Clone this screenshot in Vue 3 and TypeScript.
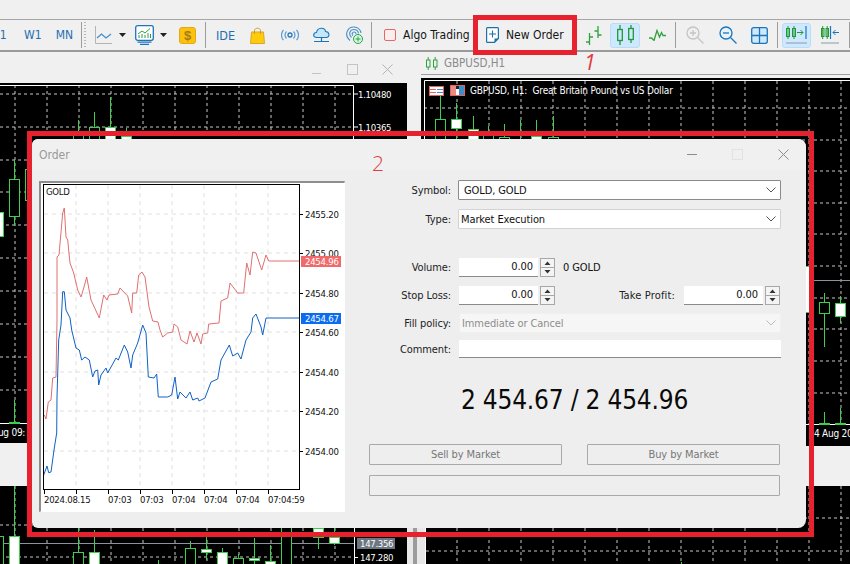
<template>
  <div class="page">
    <div class="top-band"></div>

    <div class="toolbar">
      <span class="tf ml-9 w16">D1</span>
      <span class="tf ml17 w16">W1</span>
      <span class="tf ml15 w19">MN</span>
      <i class="sep ml7"></i>
      <i class="grip ml2"></i>
      <svg class="ml9" width="17" height="18" viewBox="0 0 17 18"><path d="M.5 0V17.5H17" fill="none" stroke="#b4b4b4"/><path d="M2 12L6.500 8L11 12L16 8" fill="none" stroke="#3d8fcb" stroke-width="1.200"/></svg>
      <svg class="ml7" width="7" height="4" viewBox="0 0 7 4"><path d="M0 0H7L3.500 4Z" fill="#222"/></svg>
      <svg class="ml9" width="19" height="20" viewBox="0 0 19 20"><rect x=".7" y=".7" width="17.600" height="14.600" rx="2" fill="#fff" stroke="#1b75bc" stroke-width="1.300"/><path d="M3 9L7 6L10 8L15 3.500" fill="none" stroke="#2c9e4b"/><path d="M4 13V10M7 13V9M10 13V10M13 13V8M15.500 13V9" stroke="#2c9e4b"/><path d="M2.500 17.200H16.500M5 19.300H14" stroke="#1b75bc" stroke-width="1.300"/></svg>
      <svg class="ml6" width="7" height="4" viewBox="0 0 7 4"><path d="M0 0H7L3.500 4Z" fill="#222"/></svg>
      <span class="dollar ml12">$</span>
      <i class="sep ml9"></i>
      <span class="tf ide ml10">IDE</span>
      <svg class="ml16" width="15" height="17" viewBox="0 0 15 17"><path d="M1.500 5H13.500L14.500 16.500H.5Z" fill="#ffcb0c" stroke="#d8a72a"/><path d="M4.500 7V3.500C4.500 .5 10.500 .5 10.500 3.500V7" fill="none" stroke="#c99b2a"/></svg>
      <svg class="ml16" width="18" height="12" viewBox="0 0 18 12"><circle cx="9" cy="6" r="2" fill="none" stroke="#2a78b8" stroke-width="1.300"/><path d="M5.500 2.500C3.800 4.500 3.800 7.500 5.500 9.500M12.500 2.500C14.200 4.500 14.200 7.500 12.500 9.500M2.500 .8C-.2 3.800-.2 8.200 2.500 11.200M15.500 .8C18.200 3.800 18.200 8.200 15.500 11.200" fill="none" stroke="#5b9fd4" stroke-width="1.200"/></svg>
      <svg class="ml14" width="17" height="18" viewBox="0 0 17 18"><path d="M3.500 11.500C-.5 11.500 0 6.500 3.500 6.500C4.500 1 12 1 12.500 5.500C16.500 5.500 17.500 11.500 13 11.500Z" fill="#c8e6fa" stroke="#1b75bc" stroke-width="1.100"/><path d="M8.500 11.500V15.500M1 15.500H16" stroke="#1b75bc" stroke-width="1.200"/></svg>
      <svg class="ml15" width="18" height="18" viewBox="0 0 18 18"><path d="M5 14.500C-1.500 9 2.500 .8 9 1C13 1.100 15.500 4 16 7M6.500 11.500C3 8 5 3.500 9 3.500C11.500 3.500 13.300 5.300 13.500 7.500M8 9.500C6.300 8 7.500 6 9 6C10 6 11 6.800 11 8" fill="none" stroke="#4a90c8" stroke-width="1.100"/><circle cx="13" cy="13" r="4.500" fill="#dff5e4" stroke="#22a64a"/><path d="M13 10.500V15.500M10.500 13H15.500" stroke="#22a64a"/></svg>
      <i class="sep ml8"></i>
      <span class="algo-box ml12"></span>
      <span class="tb-text ml7 w66">Algo Trading</span>
      <svg class="ml17" width="13" height="16" viewBox="0 0 13 16"><path d="M1.500.6H11.500C12 .6 12.400 1 12.400 1.500V11.500L8.500 15.400H1.500C1 15.400 .6 15 .6 14.500V1.500C.6 1 1 .6 1.500 .6Z" fill="#fff" stroke="#1d6fa8" stroke-width="1.200"/><path d="M12.400 11.500H8.500V15.400Z" fill="#1d6fa8"/><path d="M6.500 3.500V10.500M3 7H10" stroke="#1d6fa8" stroke-width="1.100"/></svg>
      <span class="tb-text ml7 w57">New Order</span>
      <svg class="ml22" width="17" height="19" viewBox="0 0 17 19"><path d="M4.500 7V19M1 16H4.500M4.500 11H8M13 0V12M9.500 5H13M13 9H16.500" fill="none" stroke="#2fa23f" stroke-width="1.300"/></svg>
      <span class="tb-active ml8 w30">
        <svg width="17" height="20" viewBox="0 0 17 20"><g fill="none" stroke="#1f9a33" stroke-width="1.300"><rect x=".7" y="4.500" width="4.600" height="11"/><rect x="11.700" y="3.500" width="4.600" height="11"/><path d="M3 0V4.500M3 15.500V20M14 0V3.500M14 14.500V18"/></g></svg>
      </span>
      <svg class="ml9" width="17" height="12" viewBox="0 0 17 12"><path d="M0 9H2.500L5 11.500L8 1.500L10.500 8L12.500 3.500L14 6.500H17" fill="none" stroke="#2fa23f" stroke-width="1.300"/></svg>
      <i class="sep ml9"></i>
      <svg class="ml10" width="18" height="18" viewBox="0 0 18 18"><circle cx="7" cy="7" r="6" fill="none" stroke="#c4c4c4" stroke-width="1.300"/><path d="M7 4V10M4 7H10" stroke="#c4c4c4" stroke-width="1.300"/><path d="M11.500 11.500L17.500 17.500" stroke="#c4c4c4" stroke-width="1.300"/></svg>
      <svg class="ml15" width="18" height="18" viewBox="0 0 18 18"><circle cx="7" cy="7" r="6" fill="#e6f3fc" stroke="#1b75bc" stroke-width="1.300"/><path d="M4 7H10" stroke="#1b75bc" stroke-width="1.300"/><path d="M11.500 11.500L17.500 17.500" stroke="#1b75bc" stroke-width="1.300"/></svg>
      <svg class="ml14" width="17" height="17" viewBox="0 0 17 17"><rect x=".7" y=".7" width="15.600" height="15.600" rx="2" fill="#cfe9fb" stroke="#1b75bc" stroke-width="1.300"/><path d="M8.500 1V16M1 8.500H16" stroke="#1b75bc" stroke-width="1.300"/></svg>
      <i class="sep ml9"></i>
      <span class="tb-active ml4 w29">
        <svg width="21" height="20" viewBox="0 0 21 20"><g fill="none" stroke="#1f9a33" stroke-width="1"><rect x=".5" y="3.500" width="3" height="8"/><rect x="6.500" y="3.500" width="3" height="8"/><path d="M2 1V14M8 1V14"/></g><path d="M11 7.500H17M14.500 5L17 7.500L14.500 10" fill="none" stroke="#1f9a33"/><path d="M20 1V14" stroke="#1b75bc" stroke-width="1.200"/><path d="M0 18H21" stroke="#8a9aa6"/></svg>
      </span>
      <svg class="ml10" width="18" height="20" viewBox="0 0 18 20"><g fill="none" stroke="#1f9a33" stroke-width="1"><rect x=".5" y="3.500" width="2.500" height="8"/><rect x="5" y="3.500" width="2.500" height="8"/><path d="M1.700 1V14M6.200 1V14"/></g><path d="M9.500 1V14" stroke="#1b75bc" stroke-width="1.200"/><path d="M18 7.500H12M14.500 5L12 7.500L14.500 10" fill="none" stroke="#1b75bc"/><path d="M0 18H18" stroke="#8a9aa6"/></svg>
      <i class="sep ml10"></i>
    </div>

    <!-- chart windows behind the dialog -->
    <section class="mdi win-a">
      <div class="win-ctrls">
        <i class="c-min"></i><i class="c-max"></i>
        <svg width="11" height="11" viewBox="0 0 11 11"><path d="M.5 .5L10.500 10.500M10.500 .5L.5 10.500" stroke="#b4b4b4"/></svg>
      </div>
      <svg class="chart" width="407" height="360" viewBox="0 83 407 360">
        <rect x="0" y="83" width="407" height="360" fill="#000"/>
        <g class="grid">
          <path v-for="x in vA" :key="x" :d="`M${x} 85V423`"/>
          <path v-for="y in hA" :key="y" :d="`M0 ${y}H353`"/>
        </g>
        <path d="M0 85.500H353.500V423.500H0" fill="none" stroke="#fff"/>
        <path d="M353 94H358M353 127H358" stroke="#fff"/>
        <g v-for="(c, i) in candlesA" :key="i"><path :d="wick(c)" class="wick"/><rect v-bind="body(c)" :class="c.up ? 'up' : 'down'"/></g>
        <text x="358" y="98" class="axis price">1.10480</text>
        <text x="358" y="131" class="axis price">1.10365</text>
        <text x="-8" y="436" class="axis">Aug 09:</text>
      </svg>
    </section>

    <section class="mdi win-b">
      <div class="win-b-title">
        <svg width="12" height="13" viewBox="0 0 12 13"><g fill="none" stroke="#2fa23f"><rect x=".5" y="3" width="3.500" height="7"/><rect x="7.500" y="3" width="3.500" height="7"/><path d="M2.200 0V3M2.200 10V13M9.200 0V3M9.200 10V13"/></g></svg>
        <span>GBPUSD,H1</span>
      </div>
      <svg class="chart" width="429" height="368" viewBox="421 77 429 368">
        <rect x="421" y="77" width="429" height="368" fill="#000"/>
        <g class="grid">
          <path v-for="x in vB" :key="x" :d="`M${x} 80V423`"/>
          <path v-for="y in hB" :key="y" :d="`M424 ${y}H850`"/>
        </g>
        <path d="M850 79.500H424.500V423.500H850" fill="none" stroke="#fff"/>
        <path d="M814 279.500H850" stroke="#8c939a"/>
        <g v-for="(c, i) in candlesB" :key="i"><path :d="wick(c)" class="wick"/><rect v-bind="body(c)" :class="c.up ? 'up' : 'down'"/></g>
        <rect x="429.500" y="85.500" width="14" height="9" fill="#fff" stroke="#e2645c"/>
        <path d="M430 88.500H436M430 91.500H436" stroke="#e2645c"/>
        <path d="M437 88.500H443M437 91.500H443" stroke="#3d8fcb"/>
        <rect x="450.500" y="84.500" width="14" height="10" fill="#fff" stroke="#e2645c"/>
        <rect x="451" y="85" width="5" height="9" fill="#e88c84"/>
        <rect x="459" y="85" width="5" height="9" fill="#3d8fcb"/>
        <rect x="456" y="85" width="3" height="3" fill="#222"/>
        <text x="470" y="93" class="axis wide-text">GBPUSD, H1:&#160; Great Britain Pound vs US Dollar</text>
        <text x="814" y="436" class="axis">4 Aug 20</text>
      </svg>
    </section>

    <section class="mdi win-c">
      <svg class="chart" width="407" height="78" viewBox="0 486 407 78">
        <rect x="0" y="486" width="407" height="78" fill="#000"/>
        <g class="grid">
          <path v-for="x in vA" :key="x" :d="`M${x} 486V564`"/>
          <path d="M0 525H353M0 557H353"/>
        </g>
        <path d="M0 543.500H354" stroke="#8c939a"/>
        <path d="M354.500 486V564M354 557.500H358" stroke="#fff"/>
        <g v-for="(c, i) in candlesC" :key="i"><path :d="wick(c)" class="wick"/><rect v-bind="body(c)" :class="c.up ? 'up' : 'down'"/></g>
        <rect x="357" y="538" width="38" height="11" fill="#6d7782"/>
        <text x="360" y="547" class="axis price">147.356</text>
        <text x="360" y="561" class="axis price">147.280</text>
      </svg>
    </section>

    <section class="mdi win-d">
      <svg class="chart" width="424" height="78" viewBox="426 486 424 78">
        <rect x="426" y="486" width="424" height="78" fill="#000"/>
        <g class="grid">
          <path v-for="x in vB" :key="x" :d="`M${x} 486V564`"/>
          <path d="M426 518H850M426 551H850"/>
        </g>
        <path d="M681.500 562V564" stroke="#3bd14c"/>
      </svg>
    </section>
    <div class="strip"><i></i></div>

    <!-- order dialog -->
    <section class="dialog">
      <header class="dlg-head">
        <span class="dlg-title">Order</span>
        <div class="dlg-ctrls">
          <i class="d-min"></i><i class="d-max"></i>
          <svg width="11" height="11" viewBox="0 0 11 11"><path d="M.5 .5L10.500 10.500M10.500 .5L.5 10.500" stroke="#8c8c8c"/></svg>
        </div>
      </header>
      <div class="dlg-body">
        <div class="tick-frame">
          <svg width="304" height="329" viewBox="40 183 304 329">
            <rect x="40" y="183" width="304" height="329" fill="#fff"/>
            <g class="tgrid">
              <path v-for="x in tickV" :key="x" :d="`M${x} 185V489`"/>
              <path v-for="y in tickH" :key="y" :d="`M43 ${y}H298`"/>
            </g>
            <polyline :points="askLine" class="ask"/>
            <polyline :points="bidLine" class="bid"/>
            <rect x="42.500" y="184.500" width="256" height="305" fill="none" stroke="#000"/>
            <path v-for="y in tickH" :key="'t' + y" :d="`M298 ${y}.500H302`" stroke="#000"/>
            <path v-for="x in tickV" :key="'b' + x" :d="`M${x}.500 490V494`" stroke="#000"/>
            <path d="M43.500 490V494" stroke="#000"/>
            <text x="45" y="195" class="tlabel">GOLD</text>
            <text v-for="l in priceLabels" :key="l.t" x="304" :y="l.y" class="tlabel">{{ l.t }}</text>
            <rect x="300" y="256" width="40" height="11" fill="#f06a6a"/>
            <text x="304" y="265" class="tlabel tag">2454.96</text>
            <rect x="300" y="313" width="40" height="11" fill="#0a6cf0"/>
            <text x="304" y="322" class="tlabel tag">2454.67</text>
            <text x="43" y="503" class="tlabel">2024.08.15</text>
            <text v-for="t in timeLabels" :key="t.x" :x="t.x" y="503" class="tlabel">{{ t.t }}</text>
          </svg>
        </div>

        <form class="form" @submit.prevent>
          <div class="row">
            <label>Symbol:</label>
            <div class="select dark"><span class="pad5">GOLD, GOLD</span><svg width="10" height="6" viewBox="0 0 10 6"><path d="M.5 .5L5 5L9.500 .5" fill="none" stroke="#555"/></svg></div>
          </div>
          <div class="row mt9">
            <label>Type:</label>
            <div class="select"><span>Market Execution</span><svg width="10" height="6" viewBox="0 0 10 6"><path d="M.5 .5L5 5L9.500 .5" fill="none" stroke="#555"/></svg></div>
          </div>
          <div class="row mt28">
            <label>Volume:</label>
            <div class="num">0.00</div>
            <svg class="spin" width="15" height="19" viewBox="0 0 15 19"><rect x=".5" y=".5" width="14" height="18" fill="#f4f4f4" stroke="#a8a8a8"/><path d="M1 9.500H14" stroke="#a8a8a8"/><path d="M4.500 7H10.500L7.500 3.500Z M4.500 12H10.500L7.500 15.500Z" fill="#333"/></svg>
            <span class="unit">0 GOLD</span>
          </div>
          <div class="row mt8">
            <label>Stop Loss:</label>
            <div class="num">0.00</div>
            <svg class="spin" width="15" height="19" viewBox="0 0 15 19"><rect x=".5" y=".5" width="14" height="18" fill="#f4f4f4" stroke="#a8a8a8"/><path d="M1 9.500H14" stroke="#a8a8a8"/><path d="M4.500 7H10.500L7.500 3.500Z M4.500 12H10.500L7.500 15.500Z" fill="#333"/></svg>
            <label class="tp">Take Profit:</label>
            <div class="num">0.00</div>
            <svg class="spin" width="15" height="19" viewBox="0 0 15 19"><rect x=".5" y=".5" width="14" height="18" fill="#f4f4f4" stroke="#a8a8a8"/><path d="M1 9.500H14" stroke="#a8a8a8"/><path d="M4.500 7H10.500L7.500 3.500Z M4.500 12H10.500L7.500 15.500Z" fill="#333"/></svg>
          </div>
          <div class="row mt8">
            <label>Fill policy:</label>
            <div class="select off"><span>Immediate or Cancel</span><svg width="10" height="6" viewBox="0 0 10 6"><path d="M.5 .5L5 5L9.500 .5" fill="none" stroke="#bbb"/></svg></div>
          </div>
          <div class="row mt7 low">
            <label>Comment:</label>
            <div class="comment"></div>
          </div>
          <div class="quote">2 454.67 / 2 454.96</div>
          <div class="btns">
            <div class="btn">Sell by Market</div>
            <div class="btn">Buy by Market</div>
          </div>
          <div class="btn wide"></div>
        </form>
      </div>
    </section>

    <!-- red annotations drawn over the screenshot -->
    <div class="mark mark-btn"></div>
    <div class="mark mark-dlg"></div>
    <span class="num-note note-1">1</span>
    <span class="num-note note-2">2</span>
  </div>
</template>

<script setup lang="ts">
interface Candle {
  x: number;
  hi: number;
  lo: number;
  top: number;
  bot: number;
  up: boolean;
}

const c = (x: number, hi: number, top: number, bot: number, lo: number, up = false): Candle => ({ x, hi, lo, top, bot, up });

const vA = [15, 47, 79, 111, 143, 175, 207, 239, 271, 303, 335];
const hA = [94, 127, 160, 192, 225, 258, 291, 324, 357, 390];
const vB = [457, 489, 521, 553, 585, 617, 649, 681, 713, 745, 777, 809, 841];
const hB = [107, 139, 170, 202, 233, 265, 297, 328, 360, 392];
const tickV = [75, 107, 139, 171, 203, 235, 267];
const tickH = [214, 253, 293, 332, 372, 411, 451];

const candlesA: Candle[] = [
  c(-2, 200, 212, 236, 250, true),
  c(14, 160, 179, 216, 226),
  c(14, 400, 422, 423, 423),
  c(30, 150, 169, 200, 210),
  c(78, 120, 134, 150, 150),
  c(94, 112, 127, 150, 150),
  c(110, 97, 127, 150, 150, true),
  c(126, 128, 136, 150, 150, true),
];

const candlesB: Candle[] = [
  c(440, 93, 118, 150, 150),
  c(456, 102, 118, 127, 140, true),
  c(473, 115, 128, 150, 150, true),
  c(488, 125, 134, 150, 150),
  c(504, 123, 136, 150, 150),
  c(520, 119, 130, 131, 150),
  c(536, 119, 130, 131, 132),
  c(536, 132, 135, 150, 150, true),
  c(553, 115, 136, 150, 150),
  c(805, 255, 265, 311, 320, true),
  c(824, 292, 301, 312, 346),
  c(840, 295, 302, 315, 322, true),
  c(824, 411, 422, 423, 423),
  c(840, 407, 422, 423, 423),
];

const candlesC: Candle[] = [
  c(-2, 500, 536, 570, 570),
  c(14, 486, 536, 570, 570, true),
  c(78, 528, 552, 570, 570),
  c(94, 530, 552, 570, 570, true),
  c(158, 560, 570, 570, 570),
  c(190, 541, 548, 570, 570),
  c(206, 533, 549, 552, 560, true),
  c(222, 548, 552, 570, 570, true),
  c(238, 554, 558, 570, 570),
  c(254, 538, 558, 560, 570, true),
  c(270, 545, 561, 570, 570, true),
  c(286, 500, 510, 570, 570),
  c(318, 520, 528, 537, 549, true),
  c(334, 500, 537, 543, 545, true),
];

const wick = (k: Candle) => `M${k.x + 0.5} ${k.hi}V${k.top}M${k.x + 0.5} ${k.bot}V${k.lo}`;
const body = (k: Candle) => ({ x: k.x - 4.5, y: k.top + 0.5, width: 10, height: Math.max(k.bot - k.top, 1) });

const askLine =
  "43.3,415 45,419 47.3,402 50,400 51.7,378 55,377 56,320 56,257 58,255 61.7,213 63.3,208 65,237 66.7,240 69,263 72.7,273 76.7,290 80,297 83,287 85.7,277 90,300 98.3,318 102.7,295 106,300 108,295 116.7,294 119,288 126.7,296 130.7,313 131.7,293 135.7,293 137.7,275 141,272 144,277 148,307 151.7,321 157,322 159,330 161.7,337 166.7,333 171.7,332 173,324 176.7,327 180,340 186,344 189,331 193,342 196,333 200,344 201.7,334 206.7,333 207.7,324 218,323 220,301 226.7,298 229,283 236.7,293 242.7,293 245.7,263 249,275 251.7,252 255,253 260.7,270 265,255 267.7,261 298,261";
const bidLine =
  "42.7,475 46,466 47.7,472.7 50,472 53.3,448 55.7,433 56,397 57.7,340 60,325 61.7,291.7 63.3,291.7 65,310 69,318 70.7,330 75,348 78.3,350 80.7,360 84,357 88.3,360 91.7,377 94,371 96.7,370 97.7,385 100,375 105,368 106.7,373 115,358 117.3,360 123.3,345 126.7,352 130,368 131.7,355 136.7,343 141.7,325 145,333 147.3,377 153,378 155.7,374 157.3,397 166.7,397 170.7,395 174,377 176.7,399 179,392 185,398 189,392 191.7,400 196.7,398 198,401 204,398 210,382 216.7,379 220,360 228.3,345 231.7,356 236.7,353 240,359 245,340 250,332 251.7,318 255,314 260,327 261.7,335 265,318 298,318";

const priceLabels = [
  { t: "2455.20", y: 218 },
  { t: "2455.00", y: 257 },
  { t: "2454.80", y: 297 },
  { t: "2454.60", y: 336 },
  { t: "2454.40", y: 376 },
  { t: "2454.20", y: 415 },
  { t: "2454.00", y: 455 },
];

const timeLabels = [
  { t: "07:03", x: 107 },
  { t: "07:03", x: 139 },
  { t: "07:04", x: 171 },
  { t: "07:04", x: 203 },
  { t: "07:04", x: 235 },
  { t: "07:04:59", x: 267 },
];
</script>

<style>
html, body { margin: 0; background: #f0f0f0; }
</style>

<style scoped>
.page {
  position: relative;
  width: 850px;
  height: 564px;
  overflow: hidden;
  background: #f0f0f0;
  font-family: "DejaVu Sans Condensed", "Noto Sans", sans-serif;
  font-size: 12px;
  color: #111;
}
.top-band { height: 19px; border-bottom: 1px solid #a6a6a6; box-sizing: content-box; }

.toolbar {
  display: flex;
  align-items: center;
  height: 30px;
  border-bottom: 2px solid #9a9a9a;
  background: #f0f0f0;
  white-space: nowrap;
}
.toolbar > * { flex: none; }
.tf { color: #1f6fb0; text-align: center; font-size: 12px; }
.ide { width: 18px; font-size: 12.500px; }
.sep { width: 1px; height: 26px; background: #9c9c9c; }
.grip { width: 2px; height: 26px; background: repeating-linear-gradient(#b5b5b5 0 1px, transparent 1px 3px); }
.dollar {
  width: 17px;
  height: 17px;
  box-sizing: border-box;
  border: 1px solid #e3a90f;
  border-radius: 3px;
  background: #fcc10f;
  color: #a87b12;
  text-align: center;
  font: bold 13px/15px "Liberation Sans", sans-serif;
}
.algo-box { width: 12px; height: 12px; box-sizing: border-box; border: 1.500px solid #e0696b; border-radius: 2px; background: #fdeeee; }
.tb-text { font-size: 12px; text-align: center; color: #151515; }
.tb-active {
  display: flex;
  align-items: center;
  justify-content: center;
  height: 25px;
  box-sizing: border-box;
  background: #cde8ff;
  border: 1px solid #b9dcf7;
  border-radius: 3px;
}
.ml-9 { margin-left: -9px; }
.ml2 { margin-left: 2px; }
.ml4 { margin-left: 4px; }
.ml6 { margin-left: 6px; }
.ml7 { margin-left: 7px; }
.ml8 { margin-left: 8px; }
.ml9 { margin-left: 9px; }
.ml10 { margin-left: 10px; }
.ml12 { margin-left: 12px; }
.ml14 { margin-left: 14px; }
.ml15 { margin-left: 15px; }
.ml16 { margin-left: 16px; }
.ml17 { margin-left: 17px; }
.ml22 { margin-left: 22px; }
.w16 { width: 16px; }
.w19 { width: 19px; }
.w29 { width: 29px; }
.w30 { width: 30px; }
.w57 { width: 57px; }
.w66 { width: 66px; }

/* chart windows */
.mdi { position: absolute; }
.chart { display: block; }
.win-a { left: 0; top: 52px; width: 407px; padding-top: 31px; }
.win-ctrls { position: absolute; top: 12px; left: 312px; display: flex; align-items: flex-end; height: 11px; }
.c-min { width: 9px; height: 1px; background: #c4c4c4; margin-bottom: 1px; }
.c-max { width: 9px; height: 9px; border: 1px solid #c4c4c4; margin-left: 26px; }
.win-ctrls svg { margin-left: 24px; }
.win-b { left: 421px; top: 52px; width: 429px; }
.win-b-title {
  display: flex;
  align-items: center;
  gap: 6px;
  height: 22px;
  padding-left: 5px;
  margin-bottom: 3px;
  color: #8a8a8a;
  font-size: 11.500px;
  border-bottom: 1px solid #a0a0a0;
  box-sizing: content-box;
}
.win-c { left: 0; top: 486px; }
.win-d { left: 426px; top: 486px; }
.strip {
  position: absolute;
  left: 407px;
  top: 443px;
  width: 19px;
  height: 121px;
  background: #e8e8e8;
  border-right: 1px solid #fff;
  box-sizing: border-box;
}
.strip i { display: block; width: 4px; height: 100%; margin-left: 6px; background: #9c9c9c; }
.grid path { fill: none; stroke: #c8c8c8; stroke-dasharray: 3 3; }
.wick { fill: none; stroke: #3bd14c; }
.up { fill: #fff; stroke: #3bd14c; }
.down { fill: #000; stroke: #3bd14c; }
.axis { fill: #fff; font-size: 10px; letter-spacing: -0.25px; }
.axis.price { font-size: 9.500px; letter-spacing: -0.3px; }
.axis.wide-text { letter-spacing: -0.17px; }

/* dialog */
.dialog {
  position: absolute;
  left: 32px;
  top: 139px;
  width: 774px;
  height: 389px;
  background: #eeeeee;
  border-radius: 6px 8px 8px 6px;
  overflow: hidden;
}
.dlg-head {
  display: flex;
  align-items: center;
  justify-content: space-between;
  height: 31px;
  background: #f0f0f0;
  padding: 0 17px 0 7px;
}
.dlg-title { color: #999; font-size: 12px; }
.dlg-ctrls { display: flex; align-items: center; }
.d-min { width: 10px; height: 1px; background: #8c8c8c; }
.d-max { width: 9px; height: 9px; border: 1px solid #e2e2e2; margin-left: 35px; }
.dlg-ctrls svg { margin-left: 35px; }
.dlg-body { display: flex; align-items: flex-start; padding: 11px 0 0 7px; }
.tick-frame {
  flex: none;
  width: 306px;
  height: 331px;
  box-sizing: border-box;
  border: 1px solid #fff;
  border-top: 2px solid #8d8d8d;
  border-left: 2px solid #8d8d8d;
  border-right-color: #dcdcdc;
  border-bottom-color: #dcdcdc;
  background: #fff;
}
.tick-frame svg { display: block; }
.tgrid path { fill: none; stroke: #e0e0e0; stroke-dasharray: 4 4; }
.ask, .bid { fill: none; stroke-width: 1; stroke-linejoin: round; }
.ask { stroke: #e07070; }
.bid { stroke: #0f62c6; }
.tlabel { font-size: 9.500px; letter-spacing: -0.25px; fill: #111; }
.tag { fill: #fff; }

.form { width: 412px; margin-left: 24px; margin-top: -1px; flex: none; font-size: 11px; letter-spacing: -0.1px; }
.row { display: flex; align-items: center; height: 20px; }
.row.low { height: 18px; }
.row label { flex: none; width: 82px; text-align: right; margin-right: 7px; color: #222; }
.row label.tp { width: 97px; margin-left: 23px; margin-right: 8px; letter-spacing: 0.15px; }
.mt7 { margin-top: 7px; }
.mt8 { margin-top: 8px; }
.mt9 { margin-top: 9px; }
.mt28 { margin-top: 28px; }
.select {
  flex: 1;
  height: 20px;
  box-sizing: border-box;
  display: flex;
  align-items: center;
  justify-content: space-between;
  padding: 0 4px 0 2px;
  background: #fff;
  border: 1px solid #d2d2d2;
  border-radius: 1px;
}
.select.dark { border-color: #8a8a8a; }
.pad5 { padding-left: 3px; }
.select.off { background: #f6f6f6; border-color: #f0f0f0; color: #8d8d8d; margin-left: 1px; }
.num {
  width: 79px;
  height: 19px;
  margin-left: 1px;
  box-sizing: border-box;
  background: #fff;
  border-bottom: 1px solid #8a8a8a;
  padding-right: 5px;
  text-align: right;
  line-height: 18px;
}
.spin { flex: none; margin-left: 2px; }
.unit { margin-left: 8px; }
.comment { flex: 1; height: 18px; margin-left: 1px; background: #fff; border-bottom: 1px solid #8a8a8a; box-sizing: border-box; }
.quote {
  height: 86px;
  line-height: 84px;
  text-align: center;
  font-size: 26px;
  letter-spacing: -0.2px;
  margin-left: -1px;
  color: #0a0a0a;
}
.btns { display: flex; justify-content: space-between; width: 411px; }
.btn {
  width: 193px;
  height: 21px;
  box-sizing: border-box;
  border: 1px solid #a9a9a9;
  border-radius: 1px;
  text-align: center;
  line-height: 19px;
  color: #777;
}
.btn.wide { width: 411px; margin-top: 10px; }

/* annotations */
.mark { position: absolute; box-sizing: border-box; border: 5px solid #e8212e; }
.mark-btn { left: 473px; top: 15px; width: 104px; height: 40px; }
.mark-dlg { left: 27px; top: 131px; width: 787px; height: 406px; }
.num-note { position: absolute; color: #e03a44; font-family: "Open Sans", sans-serif; font-weight: 300; font-size: 21px; line-height: 24px; }
.note-1 { left: 584px; top: 50px; font-style: italic; font-weight: 400; }
.note-2 { left: 372px; top: 151px; }
</style>
